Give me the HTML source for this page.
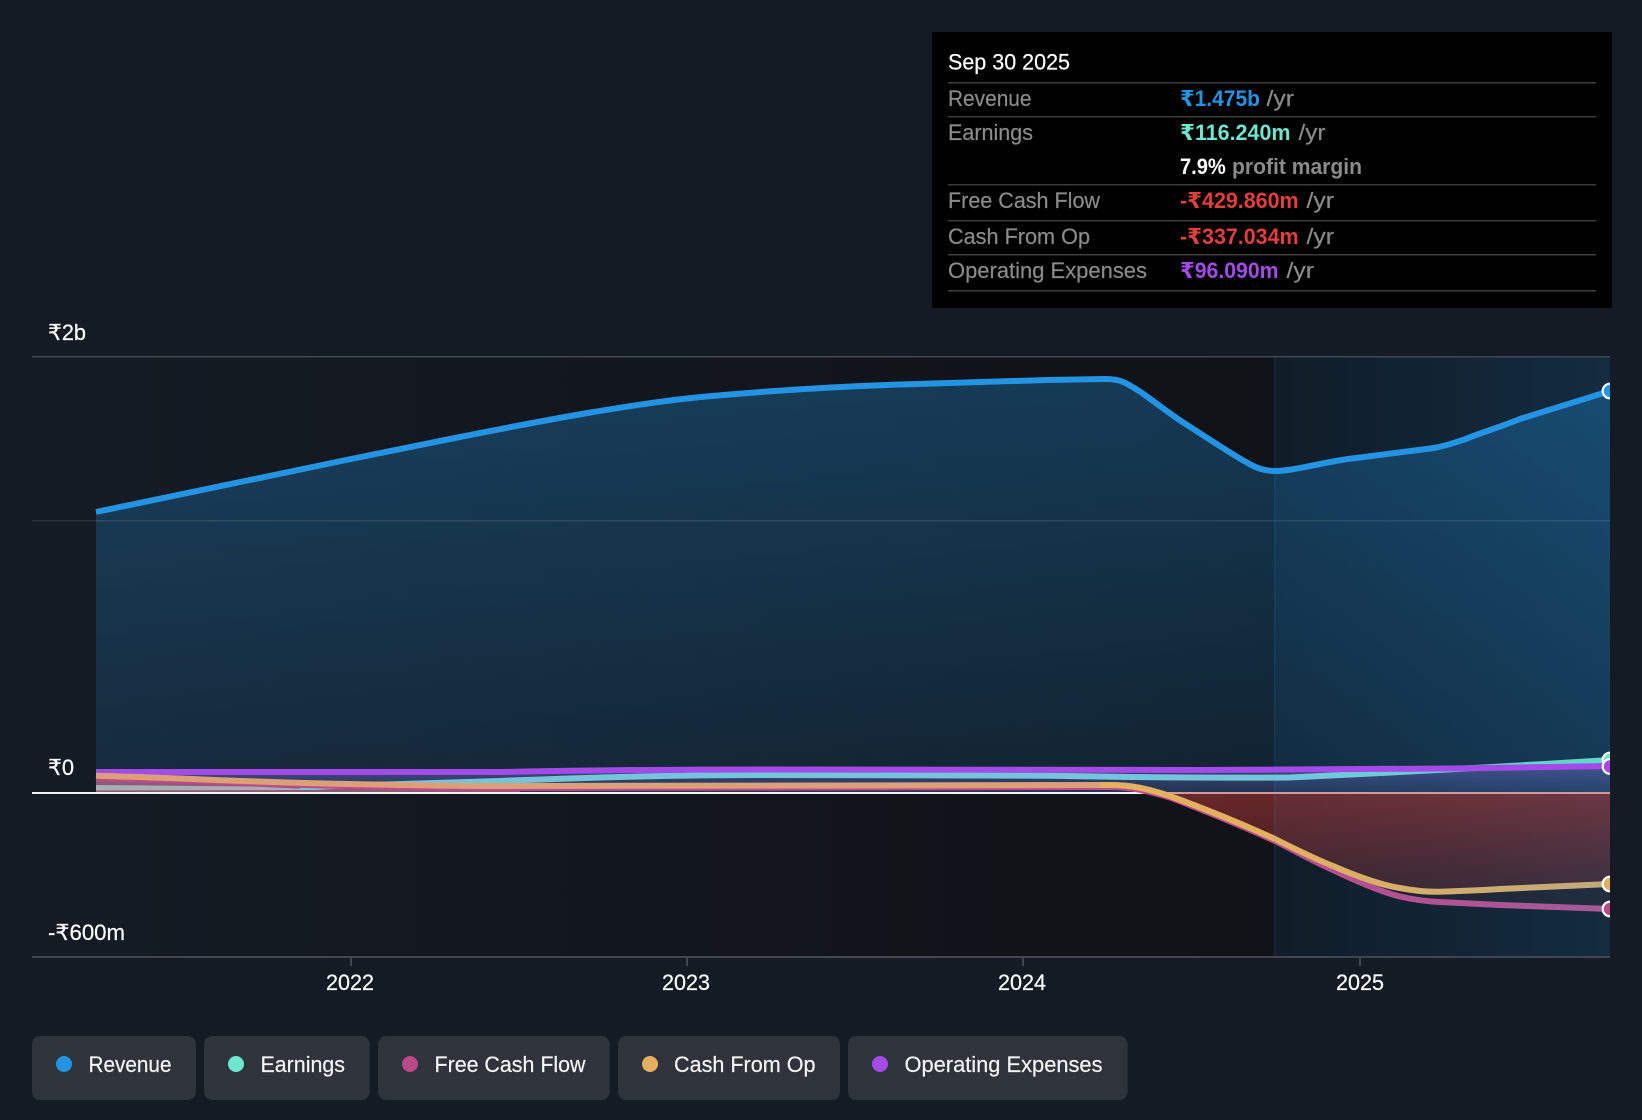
<!DOCTYPE html>
<html>
<head>
<meta charset="utf-8">
<style>
html,body{margin:0;padding:0;background:#151b24;width:1642px;height:1120px;overflow:hidden}
svg{display:block}
text{font-family:"Liberation Sans","DejaVu Sans",sans-serif;font-size:22px}
.w{fill:#fff;stroke:#fff;stroke-width:.2px}
.g{fill:#8b8b8b;stroke:#8b8b8b;stroke-width:.2px}
.l{fill:#f4f4f4;stroke:#f4f4f4;stroke-width:.2px}
.b{font-weight:700;stroke:none}
</style>
</head>
<body>
<svg width="1642" height="1120" viewBox="0 0 1642 1120" xmlns="http://www.w3.org/2000/svg">
<defs>
<linearGradient id="dark" x1="0" x2="1" y1="0" y2="0"><stop offset="0" stop-color="#151b24"/><stop offset="1" stop-color="#0f1216"/></linearGradient>
<linearGradient id="tint" x1="0" x2="1" y1="0" y2="0"><stop offset="0" stop-color="#101c28"/><stop offset="1" stop-color="#132c40"/></linearGradient>
<linearGradient id="rev" gradientUnits="userSpaceOnUse" x1="0" x2="0" y1="380" y2="793"><stop offset="0" stop-color="#2196e6" stop-opacity=".3"/><stop offset="1" stop-color="#2196e6" stop-opacity=".12"/></linearGradient>
<linearGradient id="opx" gradientUnits="userSpaceOnUse" x1="0" x2="0" y1="766" y2="793"><stop offset="0" stop-color="#7a72d8" stop-opacity=".45"/><stop offset="1" stop-color="#5a6fc0" stop-opacity=".22"/></linearGradient>
<linearGradient id="red" gradientUnits="userSpaceOnUse" x1="0" x2="0" y1="793" y2="895"><stop offset="0" stop-color="#e54646" stop-opacity=".38"/><stop offset="1" stop-color="#e54646" stop-opacity=".12"/></linearGradient>
<linearGradient id="cashS" gradientUnits="userSpaceOnUse" x1="1280" x2="1610" y1="0" y2="0"><stop offset="0" stop-color="#e3b05f"/><stop offset="1" stop-color="#bfa97c"/></linearGradient>
<linearGradient id="fcfS" gradientUnits="userSpaceOnUse" x1="1200" x2="1610" y1="0" y2="0"><stop offset="0" stop-color="#c0488c"/><stop offset="1" stop-color="#a45a9a"/></linearGradient>
<linearGradient id="earnS" gradientUnits="userSpaceOnUse" x1="1290" x2="1610" y1="0" y2="0"><stop offset="0" stop-color="#74c5dc"/><stop offset="1" stop-color="#5fd8c8"/></linearGradient>
<clipPath id="plot"><rect x="32" y="340" width="1578" height="640"/></clipPath>
</defs>

<rect width="1642" height="1120" fill="#151b24"/>

<!-- plot backgrounds -->
<rect x="96" y="357" width="1178.500" height="600" fill="url(#dark)"/>
<rect x="1274.500" y="357" width="335.500" height="600" fill="url(#tint)"/>

<!-- fills -->
<path fill="url(#rev)" d="M96 512 L351 459 L450 439 C540 421 640 402 712 396 C780 390 850 386 901 384.500 L1047 380 L1106 379 C1122 379 1128 384 1142 393 C1155 402 1170 414 1184 423 C1200 433 1228 452 1246 462 C1256 468 1264 471 1275 471 C1288 471 1305 467 1320 464 C1335 461 1345 459 1356 458 L1434 448 C1445 446 1453 443 1463 440 C1480 433 1500 427 1520 419 L1610 391 L1610 793 L96 793 Z"/>
<path fill="url(#opx)" d="M96 772 L500 772 C600 770 700 769.500 764 769.500 L1200 770 L1450 768.500 L1610 766 L1610 793 L96 793 Z"/>
<path fill="url(#red)" d="M1150 793 L1170 796 C1200 807 1240 823 1275 839 C1295 849 1315 859 1333 866 C1358 877 1385 886 1400 888 C1415 891 1428 892 1440 891.700 C1465 891 1485 890 1500 889 L1610 884 L1610 793 Z"/>
<path fill="#e54646" fill-opacity=".07" d="M1150 793 L1170 797.500 C1200 809 1240 825 1275 841 C1295 851 1315 862 1333 870 C1358 882 1385 893 1400 896.500 C1415 900 1428 901.500 1440 902 L1500 905 L1610 909 L1610 793 Z"/>
<path fill="#a8607c" fill-opacity=".8" d="M96 778 L96 792 L520 792 L520 787 C400 787 200 782 96 778 Z"/>
<path fill="#a8afb4" d="M96 785 L96 790.500 L330 790 L250 786.500 Z"/>

<!-- grid lines -->
<rect x="32" y="356" width="1578" height="1.500" fill="#43464f"/>
<rect x="32" y="520" width="1578" height="1.500" fill="#fff" fill-opacity=".1"/>
<rect x="32" y="956" width="1578" height="2" fill="#43464f"/>
<rect x="350" y="958" width="2" height="8" fill="#43464f"/>
<rect x="686" y="958" width="2" height="8" fill="#43464f"/>
<rect x="1022" y="958" width="2" height="8" fill="#43464f"/>
<rect x="1359" y="958" width="2" height="8" fill="#43464f"/>

<!-- zero line -->
<rect x="32" y="792" width="1110" height="2" fill="#f2f2f2"/>
<rect x="1142" y="792" width="468" height="2" fill="#cc9c9c"/>

<!-- lines -->
<g fill="none" stroke-width="6" clip-path="url(#plot)">
<path stroke="#2394e3" d="M96 512 L351 459 L450 439 C540 421 640 402 712 396 C780 390 850 386 901 384.500 L1047 380 L1106 379 C1122 379 1128 384 1142 393 C1155 402 1170 414 1184 423 C1200 433 1228 452 1246 462 C1256 468 1264 471 1275 471 C1288 471 1305 467 1320 464 C1335 461 1345 459 1356 458 L1434 448 C1445 446 1453 443 1463 440 C1480 433 1500 427 1520 419 L1610 391"/>
<path stroke="url(#earnS)" d="M300 787 C350 786 420 784 500 781 C600 777 700 775 764 775 L1050 775.700 C1120 777 1200 778 1290 777.500 C1340 775 1450 770 1610 760"/>
<path stroke="#a34ae8" d="M96 772 L500 772 C600 770 700 769.500 764 769.500 L1200 770 L1450 768.500 L1610 766"/>
<path stroke="url(#fcfS)" d="M96 778 C180 780 270 785 350 786 C400 787 450 788 500 788 L1110 787 C1130 787 1145 790 1170 797.500 C1200 809 1240 825 1275 841 C1295 851 1315 862 1333 870 C1358 882 1385 893 1400 896.500 C1415 900 1428 901.500 1440 902 L1500 905 L1610 909"/>
<path stroke="#dca078" d="M96 775.700 C180 778 270 783 350 784 C400 785 450 786 500 786 L1110 785"/>
<path stroke="url(#cashS)" d="M1100 785 L1110 785 C1130 785 1145 788 1170 796 C1200 807 1240 823 1275 839 C1295 849 1315 859 1333 866 C1358 877 1385 886 1400 888 C1415 891 1428 892 1440 891.700 C1465 891 1485 890 1500 889 L1610 884"/>
</g>

<!-- vertical marker -->
<rect x="1274" y="357" width="1.500" height="600" fill="#2196e6" fill-opacity=".14"/>

<!-- end markers -->
<g clip-path="url(#plot)" stroke="#fff" stroke-width="2.200">
<circle cx="1610" cy="391" r="7.300" fill="#2394e3"/>
<circle cx="1610" cy="760" r="7.300" fill="#6fe6d0"/>
<circle cx="1610" cy="766.500" r="7.300" fill="#a34ae8"/>
<circle cx="1610" cy="884" r="7.300" fill="#e3b05f"/>
<circle cx="1610" cy="909" r="7.300" fill="#b84a8a"/>
</g>

<!-- axis labels -->
<text class="w" x="48" y="340" textLength="38" lengthAdjust="spacingAndGlyphs">₹2b</text>
<text class="w" x="48" y="775" textLength="26" lengthAdjust="spacingAndGlyphs">₹0</text>
<text class="w" x="48" y="940" textLength="77" lengthAdjust="spacingAndGlyphs">-₹600m</text>
<text class="w" x="326" y="990" textLength="48" lengthAdjust="spacingAndGlyphs">2022</text>
<text class="w" x="662" y="990" textLength="48" lengthAdjust="spacingAndGlyphs">2023</text>
<text class="w" x="998" y="990" textLength="48" lengthAdjust="spacingAndGlyphs">2024</text>
<text class="w" x="1336" y="990" textLength="48" lengthAdjust="spacingAndGlyphs">2025</text>

<!-- tooltip -->
<rect x="932" y="32" width="680" height="276" fill="#000"/>
<g fill="#3c3c3c">
<rect x="948" y="82" width="648" height="1.500"/>
<rect x="948" y="116" width="648" height="1.500"/>
<rect x="948" y="184" width="648" height="1.500"/>
<rect x="948" y="220" width="648" height="1.500"/>
<rect x="948" y="254" width="648" height="1.500"/>
<rect x="948" y="290" width="648" height="1.500"/>
</g>
<text class="w" x="948" y="69.500" textLength="122" lengthAdjust="spacingAndGlyphs">Sep 30 2025</text>
<text class="g" x="948" y="106" textLength="83.500" lengthAdjust="spacingAndGlyphs">Revenue</text>
<text class="g" x="948" y="140" textLength="85" lengthAdjust="spacingAndGlyphs">Earnings</text>
<text class="g" x="948" y="208" textLength="152" lengthAdjust="spacingAndGlyphs">Free Cash Flow</text>
<text class="g" x="948" y="244" textLength="142" lengthAdjust="spacingAndGlyphs">Cash From Op</text>
<text class="g" x="948" y="278" textLength="199" lengthAdjust="spacingAndGlyphs">Operating Expenses</text>

<text class="b" fill="#2394e3" x="1180" y="106" textLength="80" lengthAdjust="spacingAndGlyphs">₹1.475b</text>
<text class="g" x="1266.500" y="106" textLength="27.500" lengthAdjust="spacingAndGlyphs">/yr</text>
<text class="b" fill="#6fe6d0" x="1180" y="140" textLength="110.500" lengthAdjust="spacingAndGlyphs">₹116.240m</text>
<text class="g" x="1298.500" y="140" textLength="27" lengthAdjust="spacingAndGlyphs">/yr</text>
<text class="w b" x="1180" y="174" textLength="45.800" lengthAdjust="spacingAndGlyphs">7.9%</text>
<text class="g b" x="1232" y="174" textLength="130" lengthAdjust="spacingAndGlyphs">profit margin</text>
<text class="b" fill="#e53e3e" x="1180" y="208" textLength="118.600" lengthAdjust="spacingAndGlyphs">-₹429.860m</text>
<text class="g" x="1306.500" y="208" textLength="27.500" lengthAdjust="spacingAndGlyphs">/yr</text>
<text class="b" fill="#e53e3e" x="1180" y="244" textLength="118.600" lengthAdjust="spacingAndGlyphs">-₹337.034m</text>
<text class="g" x="1306.500" y="244" textLength="27.500" lengthAdjust="spacingAndGlyphs">/yr</text>
<text class="b" fill="#a34ae8" x="1180" y="278" textLength="98.500" lengthAdjust="spacingAndGlyphs">₹96.090m</text>
<text class="g" x="1286.500" y="278" textLength="27.500" lengthAdjust="spacingAndGlyphs">/yr</text>

<!-- legend -->
<g fill="#2f333c">
<rect x="32" y="1036" width="164" height="64" rx="8"/>
<rect x="204" y="1036" width="165.500" height="64" rx="8"/>
<rect x="378" y="1036" width="231.500" height="64" rx="8"/>
<rect x="618" y="1036" width="222" height="64" rx="8"/>
<rect x="848" y="1036" width="279.500" height="64" rx="8"/>
</g>
<circle cx="64" cy="1064" r="8" fill="#2394e3"/>
<circle cx="236" cy="1064" r="8" fill="#6fe6d0"/>
<circle cx="410" cy="1064" r="8" fill="#b84a8a"/>
<circle cx="650" cy="1064" r="8" fill="#e3b05f"/>
<circle cx="880" cy="1064" r="8" fill="#a34ae8"/>
<text class="l" x="88.500" y="1072" textLength="83" lengthAdjust="spacingAndGlyphs">Revenue</text>
<text class="l" x="260.500" y="1072" textLength="84.500" lengthAdjust="spacingAndGlyphs">Earnings</text>
<text class="l" x="434.500" y="1072" textLength="151" lengthAdjust="spacingAndGlyphs">Free Cash Flow</text>
<text class="l" x="674" y="1072" textLength="141.500" lengthAdjust="spacingAndGlyphs">Cash From Op</text>
<text class="l" x="904.500" y="1072" textLength="198" lengthAdjust="spacingAndGlyphs">Operating Expenses</text>
</svg>
</body>
</html>
